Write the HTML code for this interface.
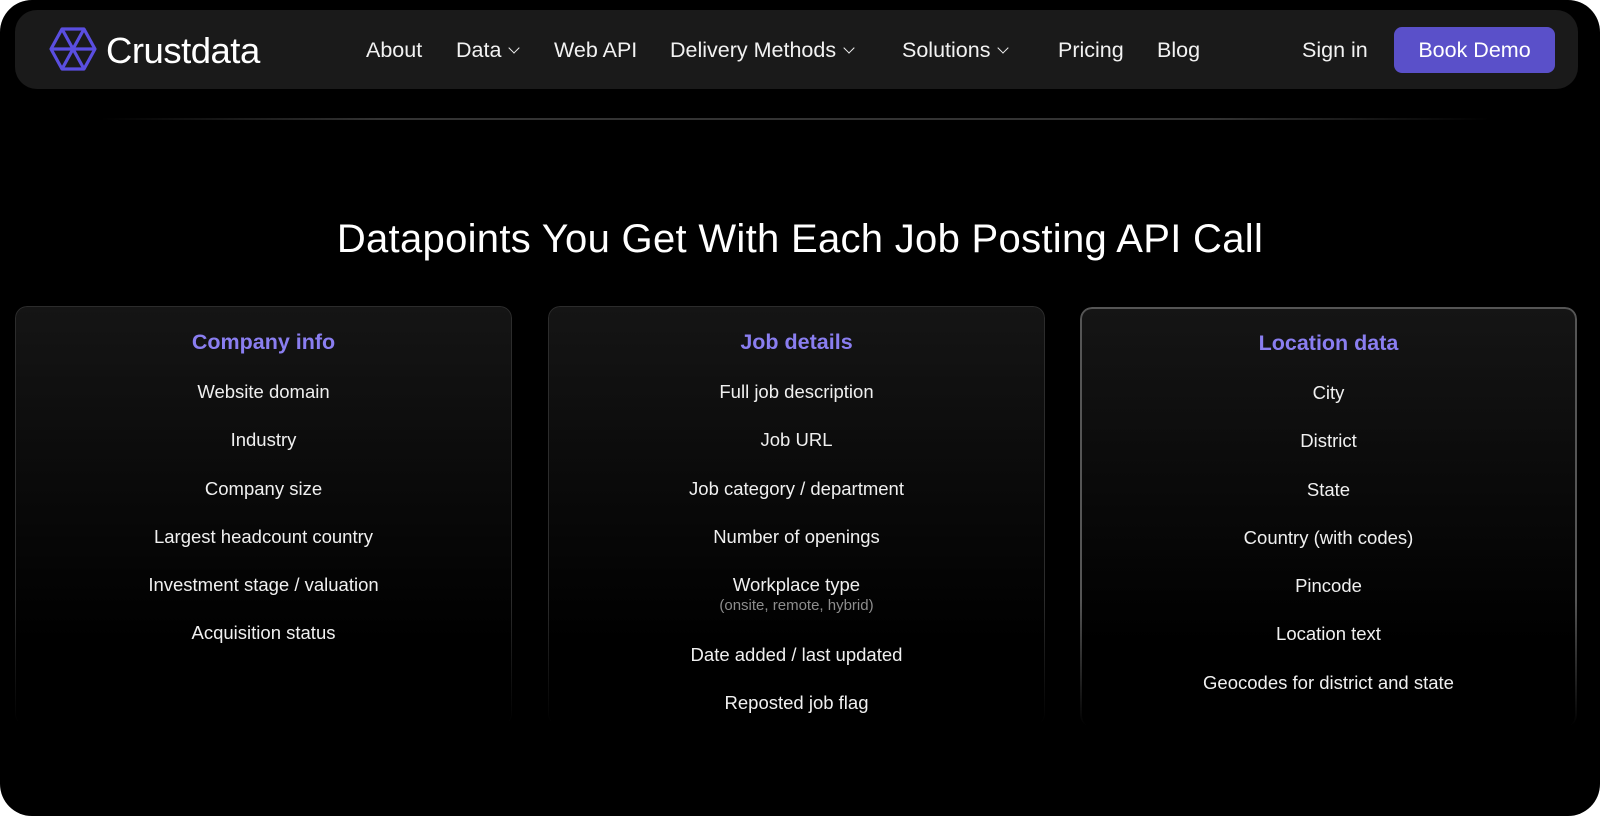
<!DOCTYPE html>
<html><head><meta charset="utf-8"><style>
*{margin:0;padding:0;box-sizing:border-box}
html,body{width:1600px;height:816px;background:#fff;overflow:hidden;font-family:"Liberation Sans",sans-serif}
.page{position:absolute;left:0;top:0;width:1600px;height:816px;background:#000;border-radius:32px;overflow:hidden}
.nav{position:absolute;left:15px;top:10px;width:1563px;height:79px;background:#1a1a1a;border-radius:22px}
.nav .t{position:absolute;top:27px;color:#f2f2f2;font-size:21.5px;line-height:26px;white-space:nowrap}
.chev{display:inline-block;width:8px;height:8px;border-right:1.8px solid #eee;border-bottom:1.8px solid #eee;transform:rotate(45deg);margin-left:9px;position:relative;top:-5px}
.logo{position:absolute;left:91px;top:20px;color:#fff;font-size:36.5px;letter-spacing:-0.5px}
.btn{position:absolute;left:1379px;top:17px;width:161px;height:46px;background:#5a50c9;border-radius:8px;color:#fff;font-size:21.5px;text-align:center;line-height:46px}
.line{position:absolute;left:100px;top:118px;width:1390px;height:2px;background:linear-gradient(90deg,transparent,#333 20%,#333 80%,transparent)}
h1{position:absolute;left:0;width:1600px;top:217px;text-align:center;color:#fff;font-weight:normal;font-size:40px;letter-spacing:0.3px}
.card{position:absolute;top:306px;width:497px;height:420px;text-align:center}
.card::before{content:"";position:absolute;inset:0;border-radius:12px;border:1.5px solid #2c2c2c;border-bottom:none;background:linear-gradient(#151515,#000 80%);-webkit-mask-image:linear-gradient(#000 70%,transparent);mask-image:linear-gradient(#000 70%,transparent);z-index:0}
.card.c3::before{border-color:#555;border-width:2px;border-bottom:none}
.card h2,.card p{position:relative;z-index:1}
.card h2{font-weight:bold;color:#8a7ef0;font-size:21.5px;padding-top:24px;height:49px}
.card p{color:#f0f0f0;font-size:18.5px;height:48.3px;line-height:22px;padding-top:26px}
.card .sub{display:block;color:#8d8d8d;font-size:15px;line-height:19px}
</style></head><body><div class="page">
<div class="nav">
<svg style="position:absolute;left:34px;top:17px" width="48" height="44" viewBox="0 0 48 44" fill="none" stroke="#5a4ee0" stroke-width="3.2" stroke-linejoin="round"><path d="M13 2H35L46 22L35 42H13L2 22Z"/><path d="M13 2L24 22L13 42M24 22H46M35 2L24 22M2 22L24 22L35 42"/></svg>
<div class="logo">Crustdata</div>
<div class="t" style="left:351px">About</div>
<div class="t" style="left:441px">Data<span class="chev"></span></div>
<div class="t" style="left:539px">Web API</div>
<div class="t" style="left:655px">Delivery Methods<span class="chev"></span></div>
<div class="t" style="left:887px">Solutions<span class="chev"></span></div>
<div class="t" style="left:1043px">Pricing</div>
<div class="t" style="left:1142px">Blog</div>
<div class="t" style="left:1287px">Sign in</div>
<div class="btn">Book Demo</div>
</div>
<div class="line"></div>
<h1>Datapoints You Get With Each Job Posting API Call</h1>
<div class="card" style="left:15px"><h2>Company info</h2>
<p>Website domain</p><p>Industry</p><p>Company size</p><p>Largest headcount country</p><p>Investment stage / valuation</p><p>Acquisition status</p></div>
<div class="card" style="left:548px"><h2>Job details</h2>
<p>Full job description</p><p>Job URL</p><p>Job category / department</p><p>Number of openings</p><p style="height:70px">Workplace type<span class="sub">(onsite, remote, hybrid)</span></p><p>Date added / last updated</p><p>Reposted job flag</p></div>
<div class="card c3" style="left:1080px;top:307px"><h2>Location data</h2>
<p>City</p><p>District</p><p>State</p><p>Country (with codes)</p><p>Pincode</p><p>Location text</p><p>Geocodes for district and state</p></div>
</div></body></html>
